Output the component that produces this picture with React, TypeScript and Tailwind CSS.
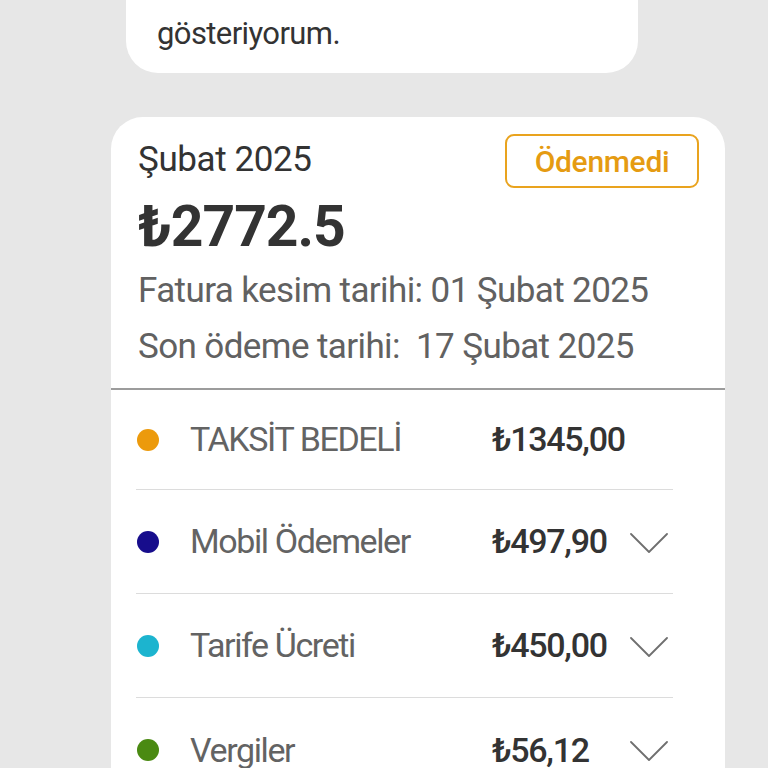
import React from "react";

const rows = [
  { color: "bg-[#ec9a0c]", label: "TAKSİT BEDELİ", amount: "₺1345,00", chevron: false },
  { color: "bg-[#170d8c]", label: "Mobil Ödemeler", amount: "₺497,90", chevron: true },
  { color: "bg-[#1cb4cf]", label: "Tarife Ücreti", amount: "₺450,00", chevron: true },
  { color: "bg-[#4a8a12]", label: "Vergiler", amount: "₺56,12", chevron: true },
];

function Chevron() {
  return (
    <svg width="38" height="22" viewBox="0 0 38 22" fill="none" className="shrink-0">
      <path d="M1 2 L19 20 L37 2" stroke="#6f6f6f" strokeWidth="1.8" strokeLinecap="round" strokeLinejoin="round" />
    </svg>
  );
}

export default function App() {
  return (
    <div className="w-[768px] h-[768px] overflow-hidden bg-[#e7e7e7] font-['Roboto','Noto_Sans',sans-serif]">
      <div className="ml-[126px] w-[512px] h-[73px] bg-white rounded-b-[32px] flex items-end pl-[31px] pb-[19px]">
        <span className="text-[31px] leading-[40px] tracking-[-0.6px] text-[#333]">gösteriyorum.</span>
      </div>
      <div className="mt-[44px] ml-[111px] w-[614px] bg-white rounded-t-[32px] pb-[40px]">
        <div className="px-[27px] pt-[17px] pb-[13px] border-b-2 border-[#9c9c9c]">
          <div className="flex justify-between items-start">
            <div className="mt-[6px] text-[35px] leading-[40px] tracking-[-0.4px] text-[#333]">Şubat 2025</div>
            <div className="mr-[-1px] w-[194px] h-[54px] border-2 border-[#e9a31e] rounded-[9px] flex items-center justify-center text-[30px] font-medium text-[#e59b12] tracking-[-0.3px]">
              Ödenmedi
            </div>
          </div>
          <div className="mt-[9px] text-[57px] leading-[60px] font-bold tracking-[-1px] text-[#333]">₺2772.5</div>
          <div className="mt-[6px] text-[35px] leading-[56px] tracking-[-0.6px] text-[#616161]">Fatura kesim tarihi: 01 Şubat 2025</div>
          <div className="text-[35px] leading-[56px] tracking-[-0.6px] text-[#616161]">Son ödeme tarihi:&nbsp; 17 Şubat 2025</div>
        </div>
        <div className="ml-[25px] mr-[52px]">
          {rows.map((r, i) => (
            <div key={i} className={`flex items-center ${i === 0 ? "h-[100px]" : "h-[104px]"} ${i < rows.length - 1 ? "border-b border-[#dcdcdc]" : ""}`}>
              <div className={`ml-[1px] w-[22px] h-[22px] rounded-full shrink-0 ${r.color}`} />
              <div className="ml-[31px] w-[302px] text-[34px] tracking-[-1.4px] text-[#636363] whitespace-nowrap">{r.label}</div>
              <div className="text-[34px] font-medium tracking-[-1.3px] text-[#333] whitespace-nowrap">{r.amount}</div>
              <div className="ml-auto mr-[5px] mt-[2px]">{r.chevron ? <Chevron /> : null}</div>
            </div>
          ))}
        </div>
      </div>
    </div>
  );
}
